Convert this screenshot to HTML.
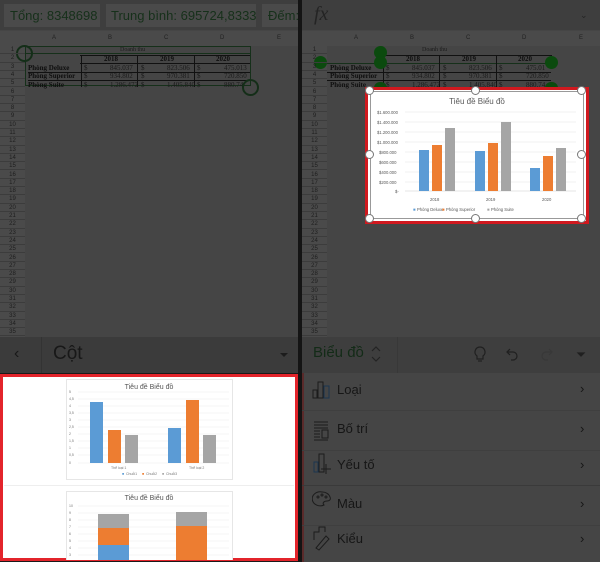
<!DOCTYPE html>
<html><head><meta charset="utf-8"><style>
*{margin:0;padding:0;box-sizing:border-box}
body{width:600px;height:562px;background:#1a1a1a;font-family:"Liberation Sans",sans-serif;position:relative;overflow:hidden}
.a{position:absolute;white-space:nowrap}
.rn{position:absolute;left:0;width:25px;height:8.3px;font-size:6px;color:#1e1e1e;text-align:center;line-height:8px;border-bottom:1px solid #3c3c3c}
</style></head><body>
<!-- LEFT PANEL -->
<div class="a" style="left:0;top:0;width:298px;height:337px;background:#454545"></div>
<div class="a" style="left:0;top:0;width:298px;height:30px;background:#3e3e3e"></div>
<div class="a" style="left:4px;top:4px;width:96px;height:23px;background:#4a4a4a;color:#16301a;font-size:13px;line-height:23px;padding-left:6px;overflow:hidden">Tổng: 8348698</div>
<div class="a" style="left:106px;top:4px;width:150px;height:23px;background:#4a4a4a;color:#16301a;font-size:13px;line-height:23px;padding-left:5px;overflow:hidden">Trung bình: 695724,8333</div>
<div class="a" style="left:262px;top:4px;width:36px;height:23px;background:#4a4a4a;color:#16301a;font-size:13px;line-height:23px;padding-left:6px;overflow:hidden">Đếm:</div>
<div class="a" style="left:0;top:31px;width:298px;height:15px;background:#4a4a4a;font-size:6px;color:#222;line-height:15px">
<span class="a" style="left:52px">A</span><span class="a" style="left:108px">B</span><span class="a" style="left:164px">C</span><span class="a" style="left:220px">D</span><span class="a" style="left:277px">E</span></div>
<div class="a" style="left:0;top:46px;width:25px;height:291px;background:#4a4a4a"></div>
<div class="a" style="left:25px;top:46px;width:226px;height:40px;border:1px solid #16301a"></div>
<div class="a" style="left:80px;top:55px;width:170px;height:1px;background:#111"></div>
<div class="a" style="left:80px;top:63px;width:170px;height:1px;background:#111"></div>
<div class="a" style="left:28px;top:72px;width:222px;height:1px;background:#111"></div>
<div class="a" style="left:28px;top:80px;width:222px;height:1px;background:#111"></div>
<div class="a" style="left:25px;top:53px;width:226px;height:1px;background:#16301a"></div>
<div class="a" style="left:81px;top:55px;width:1px;height:32px;background:#111"></div>
<div class="a" style="left:137px;top:55px;width:1px;height:32px;background:#111"></div>
<div class="a" style="left:194px;top:55px;width:1px;height:32px;background:#111"></div>
<div class="a" style="left:120px;top:47px;font:6px 'Liberation Serif',serif;color:#1c1c1c">Doanh thu</div>
<div class="a" style="left:28px;top:55px;width:222px;font:bold 7px 'Liberation Serif',serif;color:#0e0e0e">
<span class="a" style="left:76px">2018</span><span class="a" style="left:132px">2019</span><span class="a" style="left:188px">2020</span></div>
<div class="a" style="left:28px;top:64px;font:bold 7px 'Liberation Serif',serif;color:#0e0e0e;line-height:8.3px">Phòng Deluxe<br>Phòng Superior<br>Phòng Suite</div>
<div class="a" style="left:84px;top:64px;width:166px;font:7px 'Liberation Serif',serif;color:#1a1a1a;line-height:8.3px">
<span class="a" style="left:0">$<br>$<br>$</span><span class="a" style="left:26px">845.037<br>934.802<br>1.286.472</span>
<span class="a" style="left:57px">$<br>$<br>$</span><span class="a" style="left:83px">823.506<br>970.381<br>1.405.840</span>
<span class="a" style="left:113px">$<br>$<br>$</span><span class="a" style="left:140px">475.013<br>720.850<br>880.74</span></div>
<div class="a" style="left:16px;top:45px;width:17px;height:17px;border:2px solid #142e18;border-radius:50%"></div>
<div class="a" style="left:242px;top:79px;width:17px;height:17px;border:2px solid #142e18;border-radius:50%"></div>
<div id="rl"></div>
<div class="a" style="left:0;top:337px;width:298px;height:36px;background:#3b3b3b"></div>
<div class="a" style="left:14px;top:345px;color:#181818;font-size:16px">‹</div>
<div class="a" style="left:41px;top:337px;width:1px;height:36px;background:#333"></div>
<div class="a" style="left:53px;top:343px;color:#181818;font-size:19px">Cột</div>
<div class="a" style="left:280px;top:353px;border:4px solid transparent;border-top:4px solid #1c1c1c"></div>
<div class="a" style="left:0;top:374px;width:298px;height:187px;background:#fff;border:3px solid #e3242b"></div>
<div class="a" style="left:4px;top:485px;width:290px;height:1px;background:#eee"></div>
<svg class="a" style="left:66px;top:379px" width="167" height="101" viewBox="0 0 167 101">
<rect x="0.5" y="0.5" width="166" height="100" fill="#fff" stroke="#e6e6e6"/>
<text x="83" y="10" font-size="7" fill="#555" text-anchor="middle" font-family="Liberation Sans">Tiêu đề Biểu đồ</text>
<g stroke="#ececec" stroke-width="0.6"><line x1="12" y1="13" x2="163" y2="13"/><line x1="12" y1="20" x2="163" y2="20"/><line x1="12" y1="27" x2="163" y2="27"/><line x1="12" y1="34" x2="163" y2="34"/><line x1="12" y1="41" x2="163" y2="41"/><line x1="12" y1="48" x2="163" y2="48"/><line x1="12" y1="55" x2="163" y2="55"/><line x1="12" y1="62" x2="163" y2="62"/><line x1="12" y1="69" x2="163" y2="69"/><line x1="12" y1="76" x2="163" y2="76"/><line x1="12" y1="84" x2="163" y2="84"/></g>
<g font-size="3.5" fill="#777" font-family="Liberation Sans"><text x="3" y="14">5</text><text x="3" y="21">4,5</text><text x="3" y="28">4</text><text x="3" y="35">3,5</text><text x="3" y="42">3</text><text x="3" y="49">2,5</text><text x="3" y="56">2</text><text x="3" y="63">1,5</text><text x="3" y="70">1</text><text x="3" y="77">0,5</text><text x="3" y="85">0</text>
<text x="45" y="90">Thể loại 1</text><text x="123" y="90">Thể loại 2</text>
<text x="56" y="96" fill="#5b9bd5">■</text><text x="60" y="96">Chuỗi1</text><text x="76" y="96" fill="#ed7d31">■</text><text x="80" y="96">Chuỗi2</text><text x="96" y="96" fill="#a5a5a5">■</text><text x="100" y="96">Chuỗi3</text></g>
<rect x="24" y="23" width="13" height="61" fill="#5b9bd5"/><rect x="42" y="51" width="13" height="33" fill="#ed7d31"/><rect x="59" y="56" width="13" height="28" fill="#a5a5a5"/>
<rect x="102" y="49" width="13" height="35" fill="#5b9bd5"/><rect x="120" y="21" width="13" height="63" fill="#ed7d31"/><rect x="137" y="56" width="13" height="28" fill="#a5a5a5"/>
</svg>
<svg class="a" style="left:66px;top:491px" width="167" height="69" viewBox="0 0 167 69">
<rect x="0.5" y="0.5" width="166" height="75" fill="#fff" stroke="#e6e6e6"/>
<text x="83" y="9" font-size="7" fill="#555" text-anchor="middle" font-family="Liberation Sans">Tiêu đề Biểu đồ</text>
<g stroke="#ececec" stroke-width="0.6"><line x1="12" y1="15" x2="163" y2="15"/><line x1="12" y1="22" x2="163" y2="22"/><line x1="12" y1="29" x2="163" y2="29"/><line x1="12" y1="36" x2="163" y2="36"/><line x1="12" y1="43" x2="163" y2="43"/><line x1="12" y1="50" x2="163" y2="50"/><line x1="12" y1="57" x2="163" y2="57"/><line x1="12" y1="64" x2="163" y2="64"/></g>
<g font-size="3.5" fill="#777"><text x="3" y="16">10</text><text x="3" y="23">9</text><text x="3" y="30">8</text><text x="3" y="37">7</text><text x="3" y="44">6</text><text x="3" y="51">5</text><text x="3" y="58">4</text><text x="3" y="65">3</text></g>
<rect x="32" y="23" width="31" height="14" fill="#a5a5a5"/><rect x="32" y="37" width="31" height="17" fill="#ed7d31"/><rect x="32" y="54" width="31" height="15" fill="#5b9bd5"/>
<rect x="110" y="21" width="31" height="14" fill="#a5a5a5"/><rect x="110" y="35" width="31" height="34" fill="#ed7d31"/>
</svg>

<!-- RIGHT PANEL -->
<div class="a" style="left:302px;top:0;width:298px;height:337px;background:#454545"></div>
<div class="a" style="left:302px;top:0;width:298px;height:30px;background:#3e3e3e"></div>
<div class="a" style="left:314px;top:3px;font:italic 20px 'Liberation Serif',serif;color:#242424">fx</div>
<div class="a" style="left:580px;top:10px;font-size:9px;color:#242424">⌄</div>
<div class="a" style="left:302px;top:31px;width:298px;height:15px;background:#4a4a4a;font-size:6px;color:#222;line-height:15px">
<span class="a" style="left:52px">A</span><span class="a" style="left:108px">B</span><span class="a" style="left:164px">C</span><span class="a" style="left:220px">D</span><span class="a" style="left:277px">E</span></div>
<div class="a" style="left:302px;top:46px;width:25px;height:291px;background:#4a4a4a"></div>
<div class="a" style="left:384px;top:55px;width:168px;height:1px;background:#111"></div>
<div class="a" style="left:327px;top:63px;width:224px;height:1px;background:#16301a"></div>
<div class="a" style="left:327px;top:72px;width:224px;height:1px;background:#111"></div>
<div class="a" style="left:327px;top:80px;width:224px;height:1px;background:#111"></div>
<div class="a" style="left:383px;top:55px;width:1px;height:32px;background:#111"></div>
<div class="a" style="left:439px;top:55px;width:1px;height:32px;background:#111"></div>
<div class="a" style="left:496px;top:55px;width:1px;height:32px;background:#111"></div>
<div class="a" style="left:422px;top:47px;font:6px 'Liberation Serif',serif;color:#1c1c1c">Doanh thu</div>
<div class="a" style="left:330px;top:55px;width:222px;font:bold 7px 'Liberation Serif',serif;color:#0e0e0e">
<span class="a" style="left:76px">2018</span><span class="a" style="left:132px">2019</span><span class="a" style="left:188px">2020</span></div>
<div class="a" style="left:330px;top:64px;font:bold 7px 'Liberation Serif',serif;color:#0e0e0e;line-height:8.3px">Phòng Deluxe<br>Phòng Superior<br>Phòng Suite</div>
<div class="a" style="left:386px;top:64px;width:166px;font:7px 'Liberation Serif',serif;color:#1a1a1a;line-height:8.3px">
<span class="a" style="left:0">$<br>$<br>$</span><span class="a" style="left:26px">845.037<br>934.802<br>1.286.472</span>
<span class="a" style="left:57px">$<br>$<br>$</span><span class="a" style="left:83px">823.506<br>970.381<br>1.405.840</span>
<span class="a" style="left:113px">$<br>$<br>$</span><span class="a" style="left:140px">475.01<br>720.850<br>880.74</span></div>
<div class="a" style="left:374px;top:46px;width:13px;height:13px;border-radius:50%;background:#0b4a0e"></div>
<div class="a" style="left:314px;top:56px;width:13px;height:13px;border-radius:50%;background:#0b4a0e"></div>
<div class="a" style="left:374px;top:56px;width:13px;height:13px;border-radius:50%;background:#0b4a0e"></div>
<div class="a" style="left:545px;top:56px;width:13px;height:13px;border-radius:50%;background:#0b4a0e"></div>
<div class="a" style="left:374px;top:82px;width:13px;height:8px;border-radius:6px 6px 0 0;background:#0b4a0e"></div>
<div class="a" style="left:545px;top:82px;width:13px;height:8px;border-radius:6px 6px 0 0;background:#0b4a0e"></div>
<div class="a" style="left:365px;top:87px;width:224px;height:137px;border:3px solid #d0191f;background:#fff"></div>
<svg class="a" style="left:370px;top:91px" width="214" height="128" viewBox="0 0 214 128">
<rect x="0.5" y="0.5" width="213" height="127" fill="#fff" stroke="#999"/>
<text x="107" y="13" font-size="8" fill="#595959" text-anchor="middle" font-family="Liberation Sans">Tiêu đề Biểu đồ</text>
<g stroke="#e3e3e3" stroke-width="0.6"><line x1="35" y1="21" x2="206" y2="21"/><line x1="35" y1="31" x2="206" y2="31"/><line x1="35" y1="41" x2="206" y2="41"/><line x1="35" y1="51" x2="206" y2="51"/><line x1="35" y1="61" x2="206" y2="61"/><line x1="35" y1="71" x2="206" y2="71"/><line x1="35" y1="81" x2="206" y2="81"/><line x1="35" y1="91" x2="206" y2="91"/></g>
<line x1="35" y1="100" x2="206" y2="100" stroke="#ccc" stroke-width="0.6"/>
<g font-size="4.2" fill="#595959" font-family="Liberation Sans"><text x="7" y="23">$1.600.000</text><text x="7" y="33">$1.400.000</text><text x="7" y="43">$1.200.000</text><text x="7" y="53">$1.000.000</text><text x="9" y="63">$800.000</text><text x="9" y="73">$600.000</text><text x="9" y="83">$400.000</text><text x="9" y="93">$200.000</text><text x="25" y="102">$-</text>
<text x="60" y="110">2018</text><text x="116" y="110">2019</text><text x="172" y="110">2020</text>
<text x="43" y="120" fill="#5b9bd5">■</text><text x="47" y="120">Phòng Deluxe</text><text x="72" y="120" fill="#ed7d31">■</text><text x="76" y="120">Phòng Superior</text><text x="117" y="120" fill="#a5a5a5">■</text><text x="121" y="120">Phòng Suite</text></g>
<rect x="49" y="59" width="10" height="41" fill="#5b9bd5"/><rect x="62" y="54" width="10" height="46" fill="#ed7d31"/><rect x="75" y="37" width="10" height="63" fill="#a5a5a5"/>
<rect x="105" y="60" width="10" height="40" fill="#5b9bd5"/><rect x="118" y="52" width="10" height="48" fill="#ed7d31"/><rect x="131" y="31" width="10" height="69" fill="#a5a5a5"/>
<rect x="160" y="77" width="10" height="23" fill="#5b9bd5"/><rect x="173" y="65" width="10" height="35" fill="#ed7d31"/><rect x="186" y="57" width="10" height="43" fill="#a5a5a5"/>
</svg>
<div class="a" style="left:365px;top:86px;width:9px;height:9px;border-radius:50%;background:#fff;border:1px solid #777"></div>
<div class="a" style="left:471px;top:86px;width:9px;height:9px;border-radius:50%;background:#fff;border:1px solid #777"></div>
<div class="a" style="left:577px;top:86px;width:9px;height:9px;border-radius:50%;background:#fff;border:1px solid #777"></div>
<div class="a" style="left:365px;top:150px;width:9px;height:9px;border-radius:50%;background:#fff;border:1px solid #777"></div>
<div class="a" style="left:577px;top:150px;width:9px;height:9px;border-radius:50%;background:#fff;border:1px solid #777"></div>
<div class="a" style="left:365px;top:214px;width:9px;height:9px;border-radius:50%;background:#fff;border:1px solid #777"></div>
<div class="a" style="left:471px;top:214px;width:9px;height:9px;border-radius:50%;background:#fff;border:1px solid #777"></div>
<div class="a" style="left:577px;top:214px;width:9px;height:9px;border-radius:50%;background:#fff;border:1px solid #777"></div>
<div id="rr"></div>
<div class="a" style="left:302px;top:337px;width:298px;height:36px;background:#3e3e3e"></div>
<div class="a" style="left:313px;top:344px;color:#132b17;font-size:15px">Biểu đồ</div>
<svg class="a" style="left:370px;top:344px" width="12" height="20" viewBox="0 0 12 20" fill="none" stroke="#242424" stroke-width="1.2"><path d="M2 7l4-4 4 4M2 13l4 4 4-4"/></svg>
<div class="a" style="left:397px;top:337px;width:1px;height:36px;background:#383838"></div>
<svg class="a" style="left:470px;top:343px" width="120" height="22" viewBox="0 0 120 22" fill="none" stroke="#202020" stroke-width="1.2">
<path d="M10 4a5 5 0 0 1 3 9v3h-6v-3a5 5 0 0 1 3-9z"/><path d="M8 18h4"/>
<path d="M40 6l-3 3 3 3M37 9h6a4 4 0 0 1 0 8h-2"/>
<path d="M79 6l3 3-3 3M82 9h-6a4 4 0 0 0 0 8h2" stroke="#383838"/>
<path d="M108 10l3 3 3-3z" fill="#202020"/></svg>
<div class="a" style="left:302px;top:373px;width:298px;height:189px;background:#454545"></div>
<div class="a" style="left:302px;top:373px;width:2px;height:189px;background:#5a2a2a"></div>
<div class="a" style="left:302px;top:410px;width:298px;height:1px;background:#3f3f3f"></div>
<div class="a" style="left:302px;top:450px;width:298px;height:1px;background:#3f3f3f"></div>
<div class="a" style="left:302px;top:485px;width:298px;height:1px;background:#3a3a3a"></div>
<div class="a" style="left:302px;top:525px;width:298px;height:1px;background:#3f3f3f"></div>
<div class="a" style="left:337px;top:382px;font-size:13px;color:#161616">Loại</div>
<div class="a" style="left:337px;top:421px;font-size:13px;color:#161616">Bố trí</div>
<div class="a" style="left:337px;top:457px;font-size:13px;color:#161616">Yếu tố</div>
<div class="a" style="left:337px;top:496px;font-size:13px;color:#161616">Màu</div>
<div class="a" style="left:337px;top:531px;font-size:13px;color:#161616">Kiểu</div>
<div class="a" style="left:580px;top:381px;font-size:13px;color:#161616">›</div>
<div class="a" style="left:580px;top:421px;font-size:13px;color:#161616">›</div>
<div class="a" style="left:580px;top:457px;font-size:13px;color:#161616">›</div>
<div class="a" style="left:580px;top:496px;font-size:13px;color:#161616">›</div>
<div class="a" style="left:580px;top:531px;font-size:13px;color:#161616">›</div>
<svg class="a" style="left:312px;top:380px" width="20" height="172" viewBox="0 0 20 172" fill="none" stroke="#1c1c1c" stroke-width="1">
<rect x="1" y="10" width="4" height="8"/><rect x="6" y="2" width="5" height="16"/><rect x="12" y="6" width="5" height="12" stroke="#1a3550"/>
<path d="M2 42h14M2 45h14M2 48h14M2 51h6M2 54h6M2 57h6M2 60h14M10 50h6v8h-6z"/>
<rect x="2" y="82" width="4" height="10" stroke="#1a3550"/><rect x="7" y="74" width="5" height="18"/><path d="M14 84v10M9 89h10"/>
<path d="M10 112a8 7 0 1 0 2 13c-2-2 0-4 3-4 3 0 4-2 3-4a8 7 0 0 0-8-5z"/><circle cx="6" cy="117" r="1"/><circle cx="10" cy="115" r="1"/><circle cx="14" cy="117" r="1"/>
<path d="M2 160v-8h5v-5h6v5M4 168l10-12 3 3-10 11z"/></svg>
<div class="a" style="left:298px;top:0;width:4px;height:562px;background:#141414"></div>
<script>
var h='';for(var i=1;i<=35;i++){h+='<div class="rn" style="top:'+(46+(i-1)*8.3)+'px">'+i+'</div>';}
document.getElementById('rl').outerHTML=h;
var h2='';for(var i=1;i<=35;i++){h2+='<div class="rn" style="left:302px;top:'+(46+(i-1)*8.3)+'px">'+i+'</div>';}
document.getElementById('rr').outerHTML=h2;
</script>
</body></html>
